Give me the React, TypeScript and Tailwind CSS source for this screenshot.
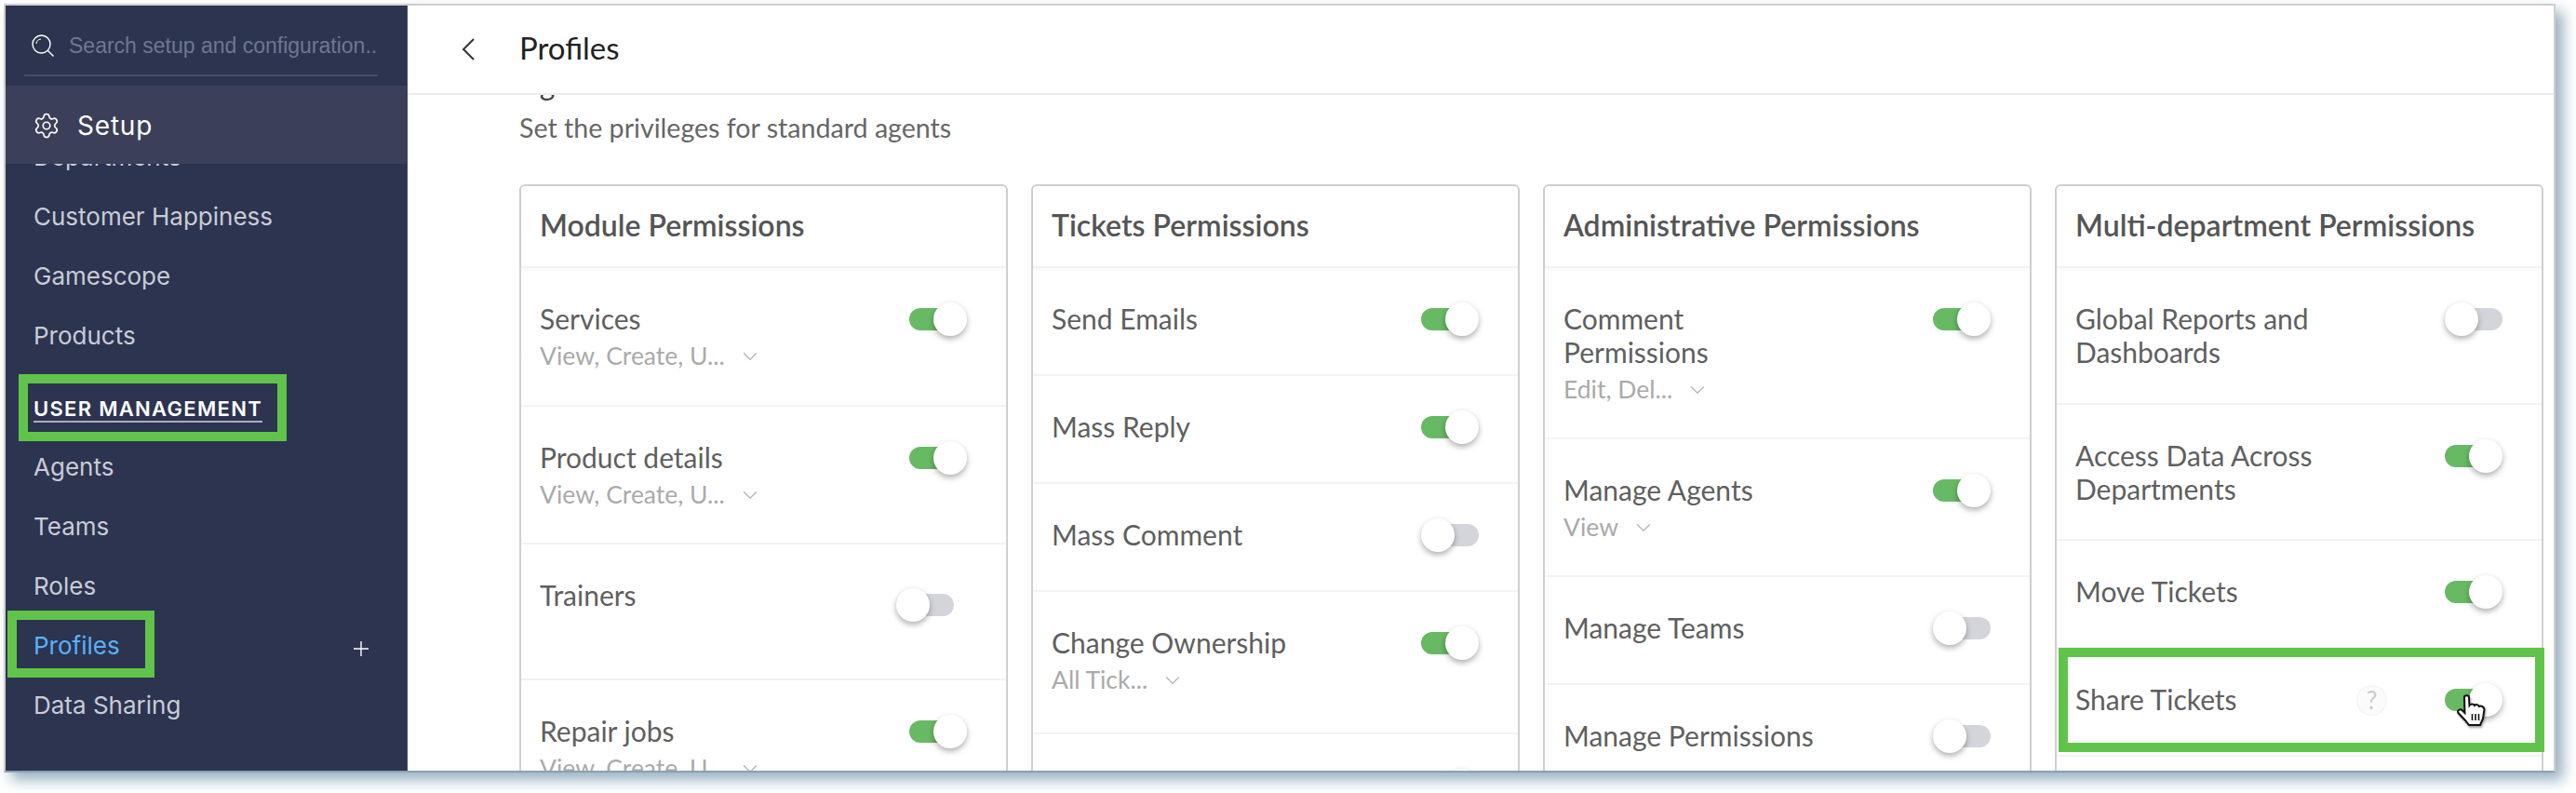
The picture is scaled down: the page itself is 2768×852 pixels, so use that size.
import { ChevronDown, Settings } from 'lucide-react'

interface Permission {
  name: string
  on: boolean
  height: string
  sub?: string
  help?: boolean
  shifted?: boolean
}

const columns: { title: string; rows: Permission[] }[] = [
  {
    title: 'Module Permissions',
    rows: [
      { name: 'Services', on: true, height: 'h-[149px]', sub: 'View, Create, U...' },
      { name: 'Product details', on: true, height: 'h-[148px]', sub: 'View, Create, U...' },
      { name: 'Trainers', on: false, height: 'h-[146px]', shifted: true },
      { name: 'Repair jobs', on: true, height: 'h-[148px]', sub: 'View, Create, U...' },
    ],
  },
  {
    title: 'Tickets Permissions',
    rows: [
      { name: 'Send Emails', on: true, height: 'h-[116px]' },
      { name: 'Mass Reply', on: true, height: 'h-[116px]' },
      { name: 'Mass Comment', on: false, height: 'h-[116px]' },
      { name: 'Change Ownership', on: true, height: 'h-[153px]', sub: 'All Tick...' },
      { name: '', on: true, height: 'h-[116px]' },
    ],
  },
  {
    title: 'Administrative Permissions',
    rows: [
      { name: 'Comment\nPermissions', on: true, height: 'h-[184px]', sub: 'Edit, Del...' },
      { name: 'Manage Agents', on: true, height: 'h-[148px]', sub: 'View' },
      { name: 'Manage Teams', on: false, height: 'h-[116px]' },
      { name: 'Manage Permissions', on: false, height: 'h-[116px]' },
    ],
  },
  {
    title: 'Multi-department Permissions',
    rows: [
      { name: 'Global Reports and\nDashboards', on: false, height: 'h-[147px]' },
      { name: 'Access Data Across\nDepartments', on: true, height: 'h-[146px]' },
      { name: 'Move Tickets', on: true, height: 'h-[116px]' },
      { name: 'Share Tickets', on: true, height: 'h-[116px]', help: true },
    ],
  },
]

function Toggle({ on, shifted }: { on: boolean; shifted?: boolean }) {
  return (
    <div className={`relative w-[62px] h-[36px] shrink-0 ${shifted ? 'mt-[11px] mr-[14px]' : 'mt-px'}`}>
      <div
        className={`absolute top-[6px] w-[48px] h-[24px] rounded-full ${
          on ? 'left-0 bg-[#68b964]' : 'right-0 bg-[#d3d5da]'
        }`}
      ></div>
      <div
        className={`absolute top-0 w-[36px] h-[36px] rounded-full bg-white shadow-[0_3px_6px_rgba(0,0,0,0.32)] ${
          on ? 'right-0' : 'left-0'
        }`}
      ></div>
    </div>
  )
}

function Row({ row }: { row: Permission }) {
  return (
    <div className={`${row.height} flex items-start pt-[36px] pl-[20px] pr-[42px] border-b-2 border-[#f3f3f3]`}>
      <div className="flex-1 min-w-0">
        <div className="text-[30px] leading-[36px] text-[#5f5f5f] whitespace-pre-line">{row.name}</div>
        {row.sub && (
          <div className="mt-1 flex items-center gap-[14px] text-[26.5px] leading-[36px] text-[#aaaaaa]">
            {row.sub}
            <ChevronDown size={26} strokeWidth={1.2} className="text-[#b5b5b5] mt-[2px]" />
          </div>
        )}
      </div>
      {row.help && (
        <div className="mr-[62px] mt-[3px] w-[33px] h-[33px] rounded-full bg-[#fbfbfb] border border-[#f0f0f0] flex items-center justify-center text-[26px] text-[#cccccc]">
          ?
        </div>
      )}
      <Toggle on={row.on} shifted={row.shifted} />
    </div>
  )
}

function Card({ title, rows }: { title: string; rows: Permission[] }) {
  return (
    <div className="h-[760px] rounded-md border-2 border-[#cfcfcf] bg-white">
      <div className="h-[88px] flex items-center pl-[20px] pb-[2px] border-b-2 border-[#f1f1f1] shadow-[0_2px_3px_rgba(0,0,0,0.03)] text-[32px] font-semibold text-[#555555]">
        {title}
      </div>
      {rows.map((row, i) => (
        <Row key={i} row={row} />
      ))}
    </div>
  )
}

function NavItem({ label, active, plus }: { label: string; active?: boolean; plus?: boolean }) {
  return (
    <div className={`h-[64px] flex items-center justify-between pl-[30px] pr-[40px] text-[26px] ${active ? 'text-[#5ab0f8]' : 'text-[#c9ccd6]'}`}>
      {label}
      {plus && (
        <svg className="w-[18px] h-[18px] mt-[8px]" viewBox="0 0 18 18" fill="none" stroke="#ffffff" strokeWidth="1.4">
          <path d="M9 1v16M1 9h16" />
        </svg>
      )}
    </div>
  )
}

function NavHeading({ label, underline }: { label: string; underline?: boolean }) {
  return (
    <div className="h-[77px] pt-[34px] pl-[30px]">
      <span
        className={`inline-block text-[22px] leading-[26px] font-semibold tracking-[1.3px] text-white ${
          underline ? 'border-b-2 border-[#a9adbb]' : ''
        }`}
      >
        {label}
      </span>
    </div>
  )
}

function Sidebar() {
  return (
    <div className="w-[432px] shrink-0 h-full flex flex-col bg-[#2c3450] border-r border-[#3e4660] font-[Inter,sans-serif]">
      <div className="h-[86px] shrink-0 pl-[20px] pr-[31px] pt-[20px]">
        <div className="h-[56px] flex items-center gap-[16px] pl-[8px] pb-[8px] border-b-2 border-[#464d68]">
          <svg className="w-[24px] h-[24px] shrink-0" viewBox="0 0 24 24" fill="none" stroke="#ffffff" strokeWidth="1.4">
            <circle cx="10.5" cy="10.5" r="9.5" />
            <path d="M17.5 17.5l6 6" />
            <path d="M5 10a5.5 5.5 0 0 1 5-5" strokeWidth="1" />
          </svg>
          <span className="text-[23px] text-[#70778e] font-['Liberation_Sans',sans-serif] whitespace-nowrap">
            Search setup and configuration..
          </span>
        </div>
      </div>
      <div className="relative z-10 h-[84px] shrink-0 flex items-center gap-[18px] pl-[29px] pt-[2px] bg-[#3b3f59] text-white text-[28px] tracking-[0.8px]">
        <Settings size={30} strokeWidth={1.3} />
        Setup
      </div>
      <div className="flex-1 overflow-hidden">
        <div className="-mt-[40px]">
          <NavItem label="Departments" />
          <NavItem label="Customer Happiness" />
          <NavItem label="Gamescope" />
          <NavItem label="Products" />
          <NavHeading label="USER MANAGEMENT" underline />
          <NavItem label="Agents" />
          <NavItem label="Teams" />
          <NavItem label="Roles" />
          <NavItem label="Profiles" active plus />
          <NavItem label="Data Sharing" />
          <NavHeading label="CHANNELS" />
        </div>
      </div>
    </div>
  )
}

export default function App() {
  return (
    <div className="relative w-[2768px] h-[852px] bg-white overflow-hidden pt-[4px] pl-[4px] font-[Lato,sans-serif]">
      <div className="w-[2742px] h-[826px] flex bg-white border-2 border-[#cfcfcf] border-b-[#8aa0ae] shadow-[8px_8px_14px_rgba(80,125,150,0.6)]">
        <Sidebar />

        <div className="flex-1 min-w-0 h-full flex flex-col">
          {/* Header */}
          <div className="h-[96px] shrink-0 flex items-center border-b-2 border-[#ececec]">
            <svg className="ml-[58px] w-[14px] h-[24px]" viewBox="0 0 14 24" fill="none" stroke="#333333" strokeWidth="2">
              <path d="M13 1L2 12l11 11" />
            </svg>
            <h1 className="ml-[48px] -mt-[2px] text-[33px] text-[#222222]">Profiles</h1>
          </div>

          {/* Permissions */}
          <div className="flex-1 overflow-hidden pl-[120px] pr-[11px]">
            <div className="-mt-[30px] h-[36px] text-[32px] leading-[36px] text-[#444444]">Agent</div>
            <p className="mt-[11px] text-[28.6px] leading-[36px] text-[#666666]">Set the privileges for standard agents</p>
            <div className="mt-[43px] grid grid-cols-4 gap-[25px]">
              {columns.map((col) => (
                <Card key={col.title} title={col.title} rows={col.rows} />
              ))}
            </div>
          </div>
        </div>
      </div>

      {/* Green annotation boxes */}
      <div className="absolute left-[20px] top-[402px] w-[288px] h-[72px] border-[10px] border-[#60c44a]"></div>
      <div className="absolute left-[8px] top-[656px] w-[158px] h-[72px] border-[10px] border-[#60c44a]"></div>
      <div className="absolute left-[2212px] top-[696px] w-[522px] h-[112px] border-[10px] border-[#60c44a]"></div>

      {/* Mouse pointer */}
      <svg className="absolute left-[2640px] top-[745px] w-[32px] h-[36px] drop-shadow-[1px_2px_1px_rgba(0,0,0,0.35)]" viewBox="0 0 32 36" fill="#ffffff" stroke="#111111" strokeWidth="2">
        <path d="M8 4C8 1.5 13 1.5 13 4l.5 9c1.5-2 4.5-2 5.5 0 1.5-1.5 4-1 5 1 2-1 5 0 5.5 3L28 27l-3 7H13l-4-5-7.5-8c-1.5-2 1.5-5 4-3l3 3z" />
        <path d="M16.5 22v7M20 22v7M23.5 22v7" strokeWidth="1.6" />
      </svg>
    </div>
  )
}
